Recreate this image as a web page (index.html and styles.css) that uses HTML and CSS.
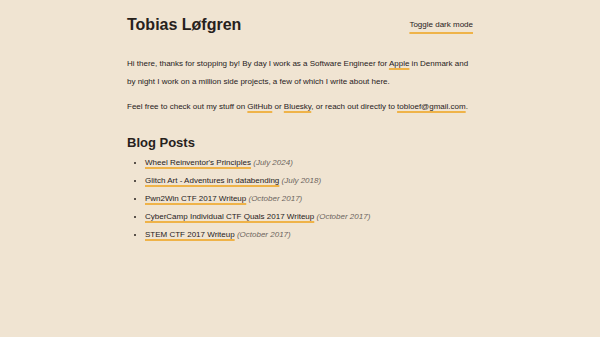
FILE: index.html
```html
<!DOCTYPE html>
<html lang="en">
<head>
  <meta charset="UTF-8">
  <meta name="viewport" content="width=device-width, initial-scale=1.0">
  <title>Tobias Løfgren</title>
  <link rel="stylesheet" href="styles.css">
</head>
<body>

  <div class="page">
    <header class="top">
      <h1>Tobias Løfgren</h1>
      <a href="#" class="toggle">Toggle dark mode</a>
    </header>

    <p>Hi there, thanks for stopping by! By day I work as a Software Engineer for <a href="#">Apple</a> in Denmark and by night I work on a million side projects, a few of which I write about here.</p>

    <p>Feel free to check out my stuff on <a href="#">GitHub</a> or <a href="#">Bluesky</a>, or reach out directly to <a href="#">tobloef@gmail.com</a>.</p>

    <h2>Blog Posts</h2>
    <ul class="posts">
      <li><a href="#">Wheel Reinventor's Principles</a> <span class="date">(July 2024)</span></li>
      <li><a href="#">Glitch Art - Adventures in databending</a> <span class="date">(July 2018)</span></li>
      <li><a href="#">Pwn2Win CTF 2017 Writeup</a> <span class="date">(October 2017)</span></li>
      <li><a href="#">CyberCamp Individual CTF Quals 2017 Writeup</a> <span class="date">(October 2017)</span></li>
      <li><a href="#">STEM CTF 2017 Writeup</a> <span class="date">(October 2017)</span></li>
    </ul>
  </div>

</body>
</html>
```

FILE: styles.css
```css
body {
  margin: 0;
  font-family: "Liberation Sans", Arial, sans-serif;
  font-size: 8px;
  line-height: 18px;
  color: #27211c;
  background-color: #f0e4d2;
}
.page {
  width: 346px;
  margin: 0 auto;
  padding-top: 13px;
}
.top {
  display: flex;
  justify-content: space-between;
  align-items: center;
  margin-bottom: 18px;
}
h1 {
  margin: 0;
  font-size: 16px;
  line-height: 24px;
}
h2 {
  margin: 18px 0 2px;
  font-size: 13px;
  line-height: 18px;
}
p {
  margin: 0 0 7px;
}
a {
  color: inherit;
  text-decoration: underline;
  text-decoration-color: #efb349;
  text-decoration-thickness: 2px;
  text-underline-offset: 2px;
}
.toggle {
  text-underline-offset: 5px;
}
.posts {
  margin: 0;
  padding-left: 18px;
}
.date {
  font-style: italic;
  color: #6c655e;
}
```
